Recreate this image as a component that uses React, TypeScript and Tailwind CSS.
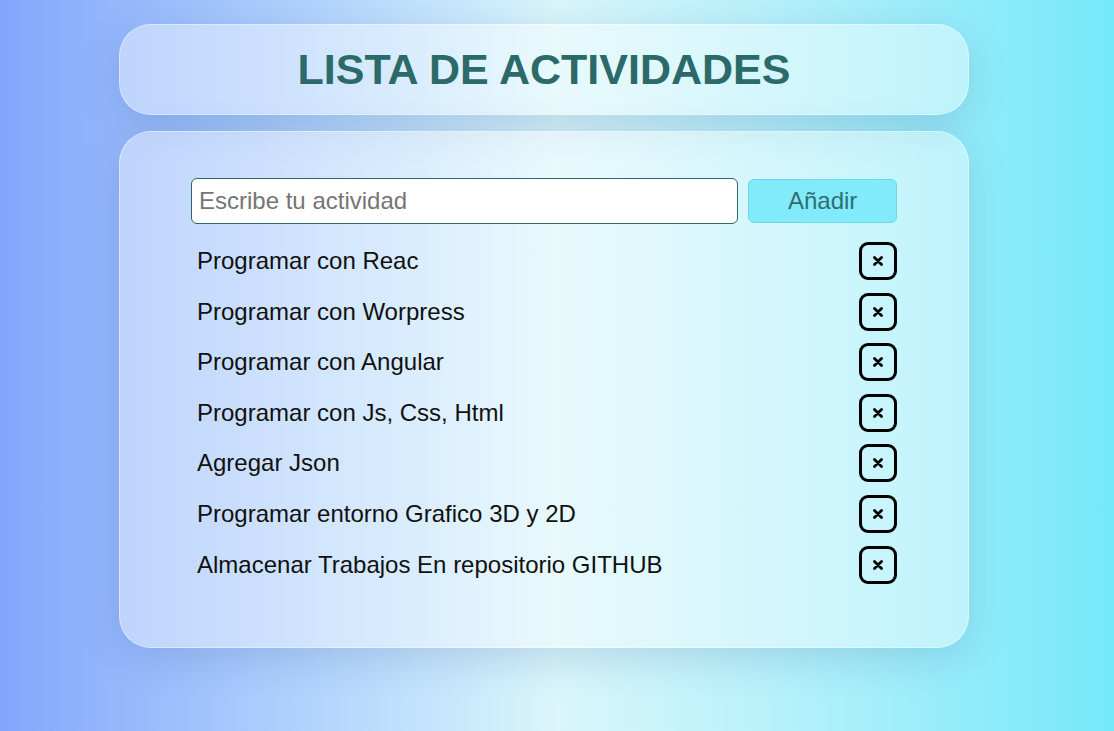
import React from 'react';

const initialTasks = [
    'Programar con Reac',
    'Programar con Worpress',
    'Programar con Angular',
    'Programar con Js, Css, Html',
    'Agregar Json',
    'Programar entorno Grafico 3D y 2D',
    'Almacenar Trabajos En repositorio GITHUB',
];

export default function App() {
    const [tasks, setTasks] = React.useState<string[]>(initialTasks);
    const [text, setText] = React.useState('');

    const addTask = () => {
        if (!text.trim()) return;
        setTasks([...tasks, text.trim()]);
        setText('');
    };

    const removeTask = (index: number) => {
        setTasks(tasks.filter((_, i) => i !== index));
    };

    return (
        <div className="min-h-screen w-full bg-gradient-to-r from-[#83a6fb] via-[#daf6fb] to-[#73e8f9] pt-[24px] font-['Liberation_Sans',Arial,sans-serif]">
            <div className="ml-[119px] flex w-[850px] flex-col gap-[16px]">
                <div className="flex h-[91px] items-center justify-center rounded-[32px] border border-white/40 bg-white/40 shadow-[0_10px_40px_rgba(40,80,140,0.18)]">
                    <h1 className="text-[43px] font-bold text-[#2b6a69]">LISTA DE ACTIVIDADES</h1>
                </div>

                <div className="rounded-[32px] border border-white/40 bg-white/40 px-[71px] pb-[63px] pt-[46px] shadow-[0_10px_40px_rgba(40,80,140,0.18)]">
                    <div className="flex items-center gap-[10px]">
                        <input
                            type="text"
                            value={text}
                            onChange={(e) => setText(e.target.value)}
                            placeholder="Escribe tu actividad"
                            className="h-[46px] w-[548px] rounded-[6px] border border-[#2b6a69] bg-white px-[7px] text-[24px] text-black outline-none placeholder:text-[#757575]"
                        />
                        <button
                            onClick={addTask}
                            className="h-[44px] w-[149px] rounded-[6px] border border-[#6fd6e8] bg-[#82ebfb] text-[24px] text-[#2f6f72]"
                        >
                            Añadir
                        </button>
                    </div>

                    <ul className="mt-[18px] flex flex-col gap-[12.6px]">
                        {tasks.map((task, i) => (
                            <li key={i} className="flex h-[38px] items-center justify-between pl-[6px]">
                                <span className="text-[24px] text-[#111]">{task}</span>
                                <button
                                    onClick={() => removeTask(i)}
                                    className="flex h-[38px] w-[38px] items-center justify-center rounded-[9px] border-[3px] border-black"
                                >
                                    <svg width="10" height="10" viewBox="0 0 10 10" fill="none" stroke="black" strokeWidth={2.8} strokeLinecap="round">
                                        <path d="M1.5 1.5l7 7M8.5 1.5l-7 7" />
                                    </svg>
                                </button>
                            </li>
                        ))}
                    </ul>
                </div>
            </div>
        </div>
    );
}
